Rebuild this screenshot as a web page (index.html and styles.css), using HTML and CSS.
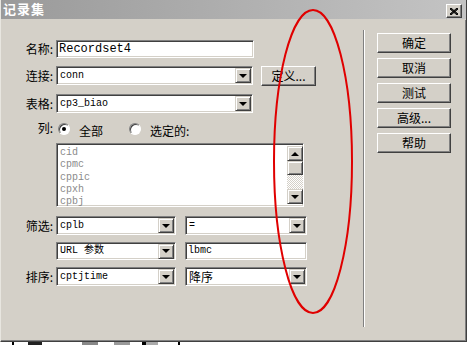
FILE: index.html
```html
<!DOCTYPE html>
<html lang="zh">
<head>
    <meta charset="UTF-8">
    <meta name="viewport" content="width=device-width, initial-scale=1.0">
    <title>记录集</title>
    <link rel="stylesheet" href="styles.css">
</head>
<body>
    <div class="window">
        <!-- Title bar -->
        <div class="titlebar">
            <span class="title">记录集</span>
            <span class="close-btn">
                <svg width="8" height="7" viewBox="0 0 8 7"><path d="M0 0 L8 7 M1 0 L8 6 M0 1 L7 7 M8 0 L0 7 M7 0 L0 6 M8 1 L1 7" stroke="#000" stroke-width="1"/></svg>
            </span>
        </div>

        <div class="body">
            <!-- Form -->
            <div class="form">
                <div class="row row-name">
                    <label class="label">名称:</label>
                    <div class="field input w-name mono big">Recordset4</div>
                </div>

                <div class="row row-conn">
                    <label class="label">连接:</label>
                    <div class="field select w-wide mono"><span>conn</span><span class="arrow"></span></div>
                    <div class="btn btn-define">定义...</div>
                </div>

                <div class="row row-table">
                    <label class="label">表格:</label>
                    <div class="field select w-wide mono"><span>cp3_biao</span><span class="arrow"></span></div>
                </div>

                <div class="row row-radio">
                    <label class="label">列:</label>
                    <span class="radio checked"></span>
                    <span class="radio-text">全部</span>
                    <span class="radio second"></span>
                    <span class="radio-text">选定的:</span>
                </div>

                <div class="row row-list">
                    <div class="field listbox">
                        <div class="items mono">
                            <div>cid</div>
                            <div>cpmc</div>
                            <div>cppic</div>
                            <div>cpxh</div>
                            <div>cpbj</div>
                        </div>
                        <div class="scrollbar">
                            <span class="sb-btn"><span class="tri up"></span></span>
                            <span class="sb-thumb"></span>
                            <span class="sb-track"></span>
                            <span class="sb-btn"><span class="tri"></span></span>
                        </div>
                    </div>
                </div>

                <div class="row row-filter">
                    <label class="label">筛选:</label>
                    <div class="field select w-half mono"><span>cplb</span><span class="arrow"></span></div>
                    <div class="field select w-half2 mono"><span>=</span><span class="arrow"></span></div>
                </div>

                <div class="row row-url">
                    <label class="label"></label>
                    <div class="field select w-half mono"><span>URL 参数</span><span class="arrow"></span></div>
                    <div class="field input w-half2 mono"><span>lbmc</span></div>
                </div>

                <div class="row row-sort">
                    <label class="label">排序:</label>
                    <div class="field select w-half mono"><span>cptjtime</span><span class="arrow"></span></div>
                    <div class="field select w-half2"><span>降序</span><span class="arrow"></span></div>
                </div>
            </div>

            <div class="separator"></div>

            <!-- Buttons -->
            <div class="buttons">
                <div class="btn">确定</div>
                <div class="btn">取消</div>
                <div class="btn">测试</div>
                <div class="btn">高级...</div>
                <div class="btn">帮助</div>
            </div>
        </div>

        <!-- Red annotation -->
        <svg class="mark" width="80" height="305" viewBox="0 0 80 305">
            <ellipse cx="40" cy="152.5" rx="39" ry="151.5" fill="none" stroke="#e00000" stroke-width="2"/>
        </svg>
    </div>

    <div class="behind">
        <span class="bk b1"></span>
        <span class="bk b2"></span>
        <span class="bk b3"></span>
        <span class="bk b4"></span>
        <span class="bk b5"></span>
        <span class="bk b6"></span>
        <span class="bk b1"></span>
    </div>
</body>
</html>
```

FILE: styles.css
```css
/* Reset */
* {
    margin: 0;
    padding: 0;
    box-sizing: border-box;
}

body {
    background: #fff;
    font-family: "Noto Sans CJK SC", "Liberation Sans", sans-serif;
    font-size: 12px;
    color: #000;
}

.mono {
    font-family: "Liberation Mono", "Noto Sans CJK SC", monospace;
    font-size: 10px;
}

.big {
    font-size: 12px;
}

/* Window frame */
.window {
    position: relative;
    width: 467px;
    height: 342px;
    background: #d4d0c8;
    border: 1px solid;
    border-top: none;
    border-color: #d4d0c8 #404040 #404040 #e8e6e0;
    box-shadow: inset -1px -1px 0 #808080;
}

.titlebar {
    height: 20px;
    display: flex;
    align-items: center;
    justify-content: space-between;
    padding: 0 4px 1px 2px;
    background: linear-gradient(to right, #9a9a9a, #c4c4c4);
    border-bottom: 1px solid #d4d0c8;
}

.title {
    color: #fff;
    font-weight: bold;
    font-size: 13px;
    letter-spacing: 1px;
    line-height: 18px;
}

.close-btn {
    width: 16px;
    height: 14px;
    margin-top: 4px;
    display: flex;
    align-items: center;
    justify-content: center;
    background: #d4d0c8;
    border: 1px solid;
    border-color: #fff #404040 #404040 #fff;
    box-shadow: inset -1px -1px 0 #808080;
}

.body {
    display: flex;
}

/* Form area */
.form {
    width: 362px;
    padding-top: 20px;
    display: flex;
    flex-direction: column;
}

.row {
    display: flex;
    align-items: center;
    height: 19px;
}

.row-name { height: 18px; }
.row-conn { margin-top: 8px; }
.row-table { margin-top: 9px; }
.row-radio { margin-top: 6px; height: 18px; }
.row-list { margin-top: 6px; height: 64px; padding-left: 55px; }
.row-filter { margin-top: 9px; }
.row-url { margin-top: 7px; height: 18px; }
.row-sort { margin-top: 7px; }

.label {
    width: 52px;
    margin-right: 3px;
    text-align: right;
    line-height: 16px;
    color: #000;
}

/* Sunken fields */
.field {
    height: 100%;
    background: #fff;
    border: 1px solid;
    border-color: #808080 #fff #fff #808080;
    box-shadow: inset 1px 1px 0 #404040, inset -1px -1px 0 #d4d0c8;
    display: flex;
    align-items: center;
    padding: 0 2px 0 3px;
    line-height: 14px;
    white-space: nowrap;
}

.input {
    padding-left: 2px;
}

.w-name { width: 198px; }
.w-wide { width: 197px; }
.w-half { width: 120px; }
.w-half2 { width: 122px; margin-left: 9px; }

.select span:first-child {
    flex: 1;
}

.arrow {
    width: 16px;
    height: 15px;
    margin-right: -1px;
    background: #d4d0c8;
    border: 1px solid;
    border-color: #d4d0c8 #404040 #404040 #d4d0c8;
    box-shadow: inset 1px 1px 0 #fff, inset -1px -1px 0 #808080;
    display: flex;
    align-items: center;
    justify-content: center;
}

.arrow::after,
.tri {
    content: "";
    width: 0;
    height: 0;
    border-left: 4px solid transparent;
    border-right: 4px solid transparent;
    border-top: 4px solid #000;
}

.tri.up {
    border-top: none;
    border-bottom: 4px solid #000;
}

/* Buttons */
.btn {
    height: 20px;
    background: #d4d0c8;
    border: 1px solid;
    border-color: #fff #404040 #404040 #fff;
    box-shadow: inset -1px -1px 0 #808080;
    display: flex;
    align-items: center;
    justify-content: center;
    line-height: 16px;
}

.btn-define {
    width: 55px;
    margin-left: 8px;
    margin-top: 1px;
}

/* Radio buttons */
.radio {
    width: 12px;
    height: 12px;
    border-radius: 50%;
    background: #fff;
    border: 1px solid;
    border-color: #808080 #fff #fff #808080;
    box-shadow: inset 1px 1px 0 #404040;
    margin-left: 2px;
    margin-top: 2px;
    display: flex;
    align-items: center;
    justify-content: center;
}

.radio.checked::after {
    content: "";
    width: 4px;
    height: 4px;
    border-radius: 50%;
    background: #000;
}

.radio.second {
    margin-left: 26px;
}

.radio-text {
    margin-left: 9px;
    margin-top: 4px;
}

/* List box */
.listbox {
    width: 248px;
    align-items: stretch;
    padding: 2px 0 2px 3px;
    overflow: hidden;
}

.items {
    flex: 1;
    color: #8a8a8a;
    line-height: 12.3px;
    padding-top: 1px;
}

.scrollbar {
    width: 16px;
    display: flex;
    flex-direction: column;
}

.sb-btn,
.sb-thumb {
    height: 15px;
    background: #d4d0c8;
    border: 1px solid;
    border-color: #d4d0c8 #404040 #404040 #d4d0c8;
    box-shadow: inset 1px 1px 0 #fff, inset -1px -1px 0 #808080;
    display: flex;
    align-items: center;
    justify-content: center;
}

.sb-thumb {
    height: 14px;
}

.sb-track {
    flex: 1;
    background: repeating-conic-gradient(#fff 0 25%, #d4d0c8 0 50%) 0 0 / 2px 2px;
}

/* Separator and right column */
.separator {
    width: 2px;
    height: 297px;
    margin-top: 10px;
    border-left: 1px solid #808080;
    border-right: 1px solid #fff;
}

.buttons {
    width: 74px;
    margin-left: 12px;
    padding-top: 13px;
    display: flex;
    flex-direction: column;
    gap: 5px;
}

/* Annotation ellipse */
.mark {
    position: absolute;
    left: 272px;
    top: 9px;
}

/* Background behind the dialog */
.behind {
    display: flex;
    height: 3px;
    padding-left: 12px;
}

.bk {
    height: 3px;
}

.b1 { width: 2px; background: #000; }
.b2 { width: 14px; margin-left: 14px; background: #222; }
.b3 { width: 16px; margin-left: 40px; background: #888; }
.b4 { width: 16px; margin-left: 16px; background: #999; }
.b5 { width: 4px; margin-left: 12px; background: #000; }
.b6 { width: 12px; background: #aaa; margin-right: 20px; }
```
